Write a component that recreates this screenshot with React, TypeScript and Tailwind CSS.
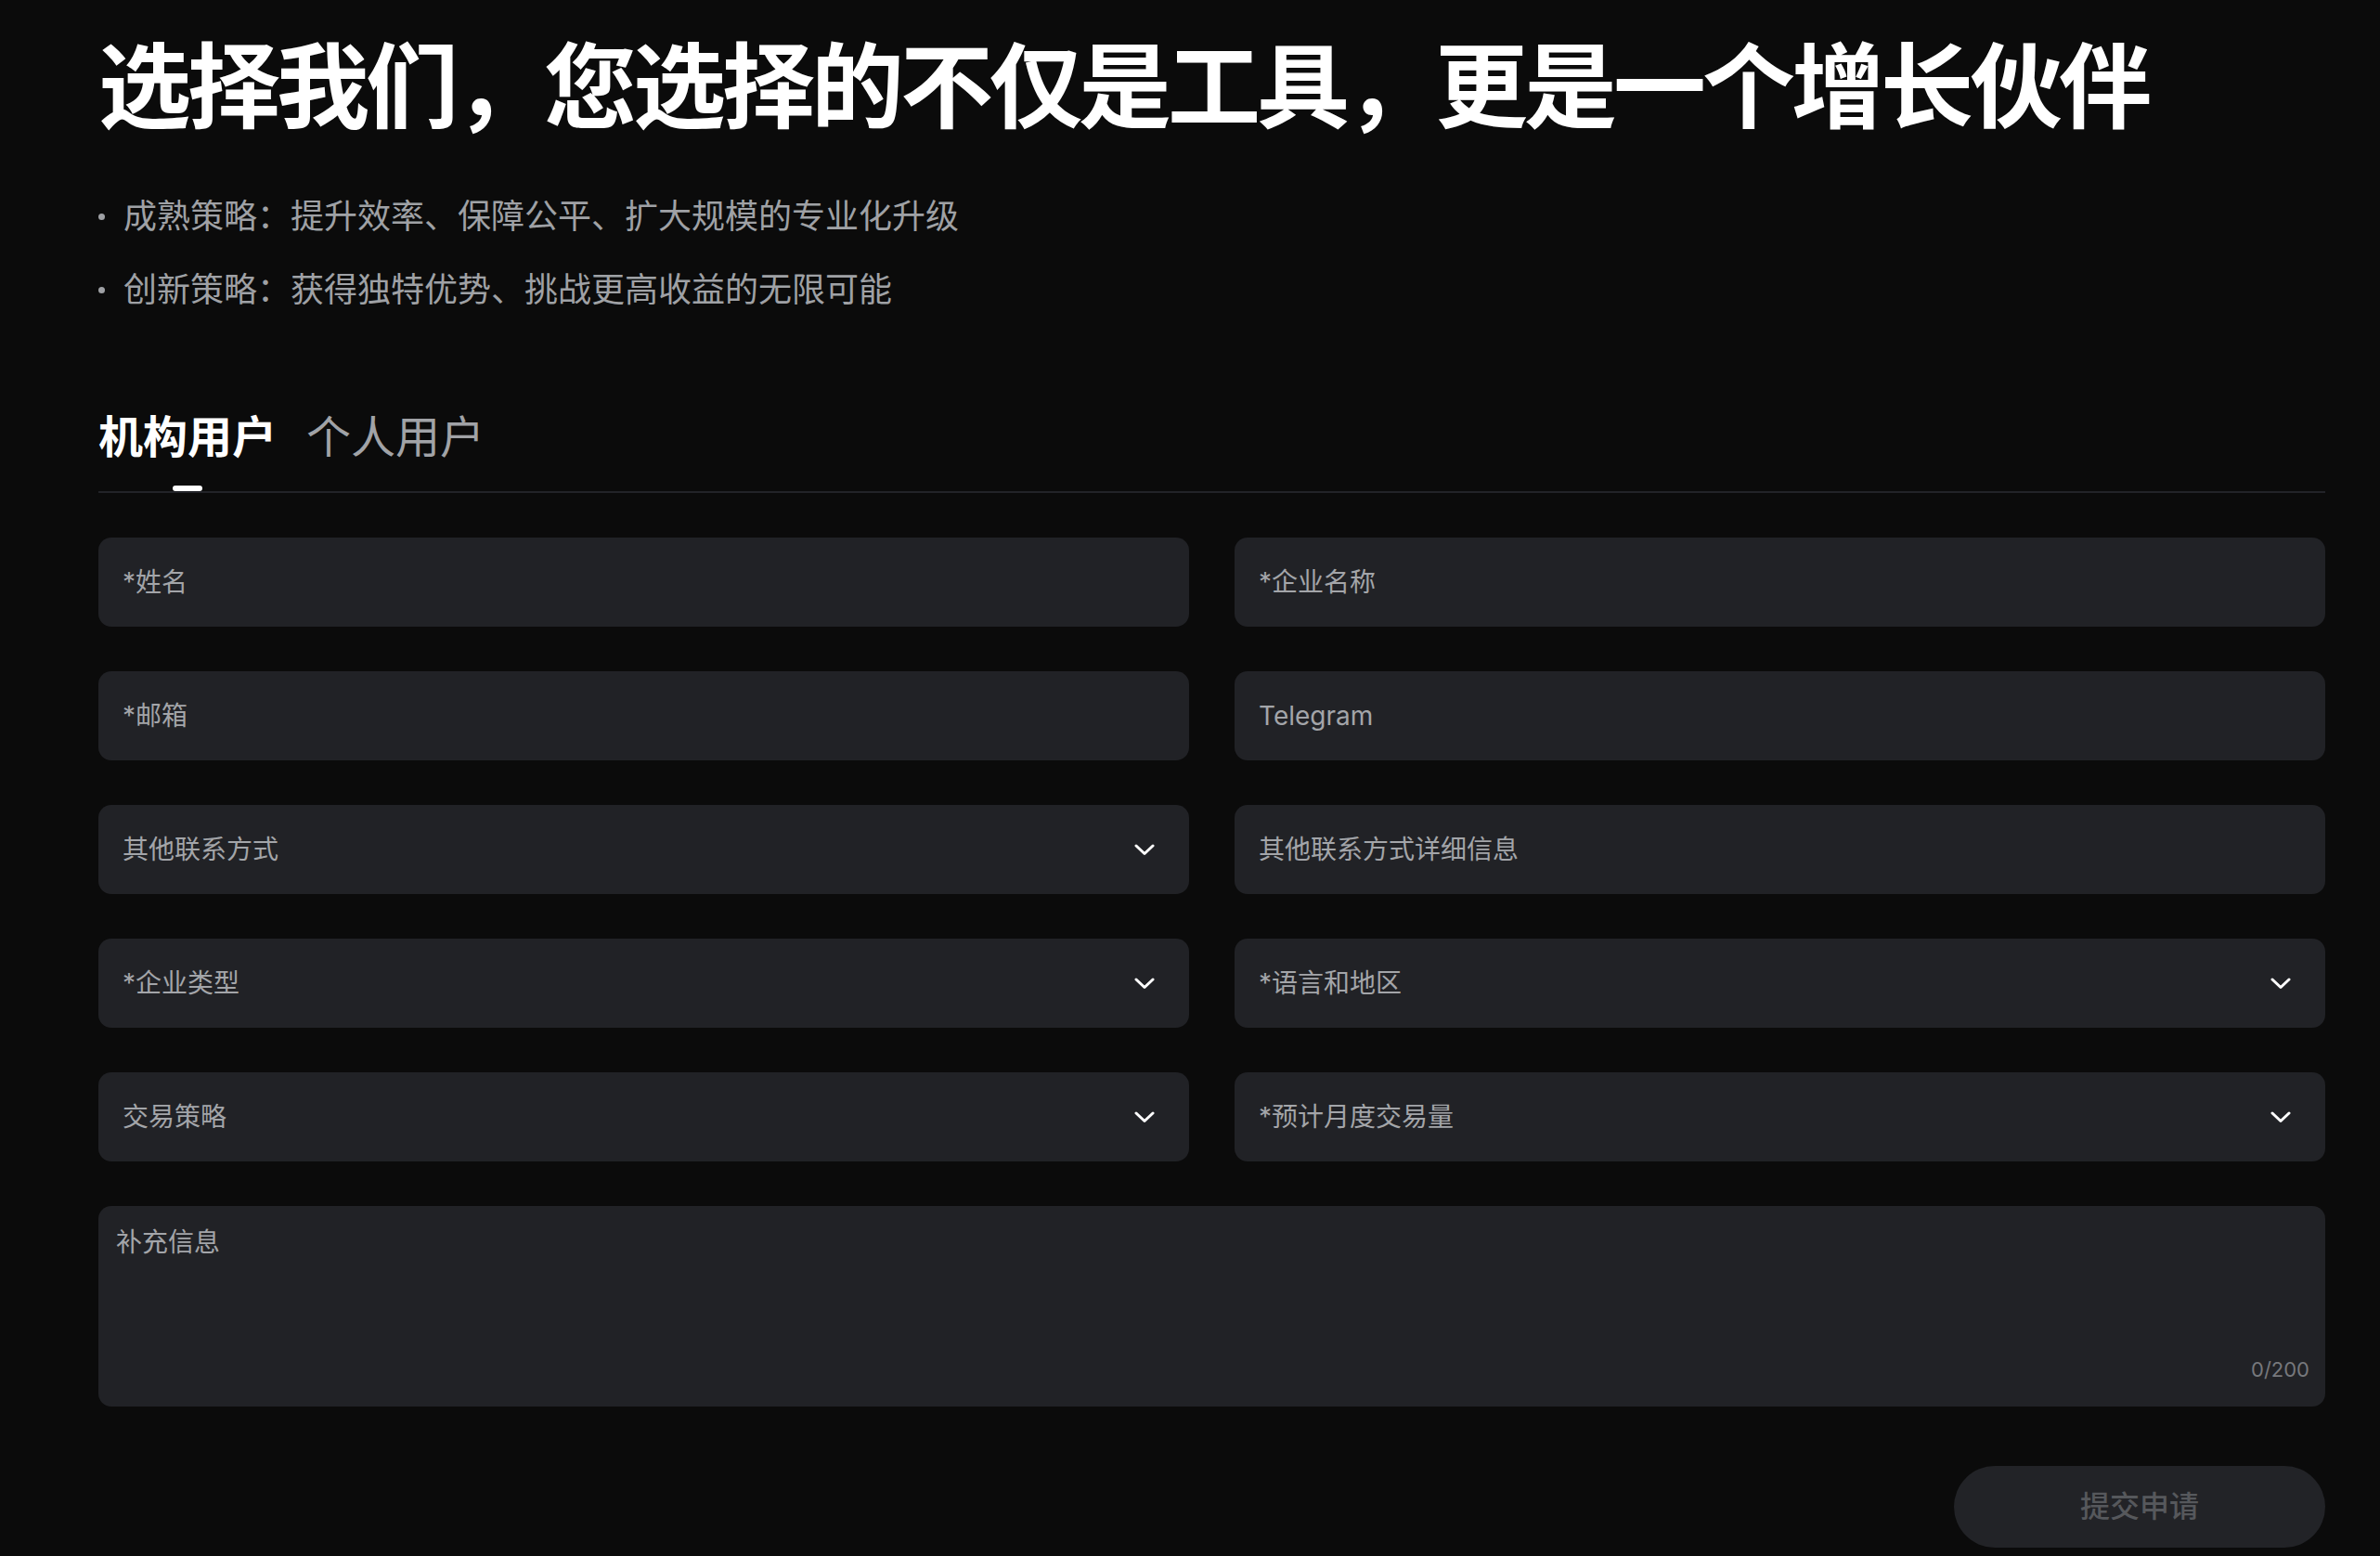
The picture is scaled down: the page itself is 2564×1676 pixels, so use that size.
const fields = [
  { label: '*姓名', select: false },
  { label: '*企业名称', select: false },
  { label: '*邮箱', select: false },
  { label: 'Telegram', select: false },
  { label: '其他联系方式', select: true },
  { label: '其他联系方式详细信息', select: false },
  { label: '*企业类型', select: true },
  { label: '*语言和地区', select: true },
  { label: '交易策略', select: true },
  { label: '*预计月度交易量', select: true },
]

const bullets = [
  '成熟策略：提升效率、保障公平、扩大规模的专业化升级',
  '创新策略：获得独特优势、挑战更高收益的无限可能',
]

function Chevron() {
  return (
    <svg width="22" height="13" viewBox="0 0 22 13" fill="none">
      <path
        d="M2 2l9 8.5L20 2"
        stroke="#ffffff"
        strokeWidth="3"
        strokeLinecap="round"
        strokeLinejoin="round"
      />
    </svg>
  )
}

function Field({ label, select }: { label: string; select: boolean }) {
  return (
    <div className="flex h-[96px] items-center justify-between rounded-[14px] bg-[#212226] pl-[26px] pr-[37px]">
      <span className="text-[28px] leading-[40px] text-[#a3a5a9]">{label}</span>
      {select && <Chevron />}
    </div>
  )
}

export default function App() {
  return (
    <div
      className="min-h-screen bg-[#0b0b0b] pb-[40px] pl-[106px] pt-[44px]"
      style={{ fontFamily: 'Inter, "Noto Sans CJK SC", sans-serif' }}
    >
      <div className="flex w-[2399px] flex-col">
        <h1 className="text-[100px] font-bold leading-[100px] tracking-[-4px] text-white">
          选择我们，您选择的不仅是工具，更是一个增长伙伴
        </h1>

        <ul className="mt-[65px] flex flex-col gap-[31px]">
          {bullets.map((b) => (
            <li key={b} className="flex items-center gap-[20px] text-[36px] leading-[48px] text-[#9fa1a5]">
              <span className="h-[7px] w-[7px] rounded-full bg-[#9fa1a5]" />
              {b}
            </li>
          ))}
        </ul>

        <div className="mt-[106px] flex gap-[32px] border-b-2 border-[#222328]">
          <div className="flex flex-col items-center">
            <span className="text-[48px] font-bold leading-[58px] text-white">机构用户</span>
            <span className="mt-[23px] h-[6px] w-[32px] rounded-[3px] bg-white" />
          </div>
          <div className="flex flex-col items-center">
            <span className="text-[48px] leading-[58px] text-[#a1a3a7]">个人用户</span>
            <span className="mt-[23px] h-[6px] w-[32px]" />
          </div>
        </div>

        <div className="mt-[48px] grid grid-cols-2 gap-x-[49px] gap-y-[48px]">
          {fields.map((f) => (
            <Field key={f.label} label={f.label} select={f.select} />
          ))}
        </div>

        <div className="mt-[48px] flex h-[216px] flex-col rounded-[14px] bg-[#212226] pb-[29px] pl-[19px] pr-[17px] pt-[19px]">
          <span className="text-[28px] leading-[40px] text-[#a3a5a9]">补充信息</span>
          <span className="mt-auto self-end text-[22px] leading-[22px] text-[#76787c]">0/200</span>
        </div>

        <button className="mt-[64px] h-[88px] w-[400px] self-end rounded-full bg-[#222327] text-[32px] font-medium text-[#56585c]">
          提交申请
        </button>
      </div>
    </div>
  )
}
